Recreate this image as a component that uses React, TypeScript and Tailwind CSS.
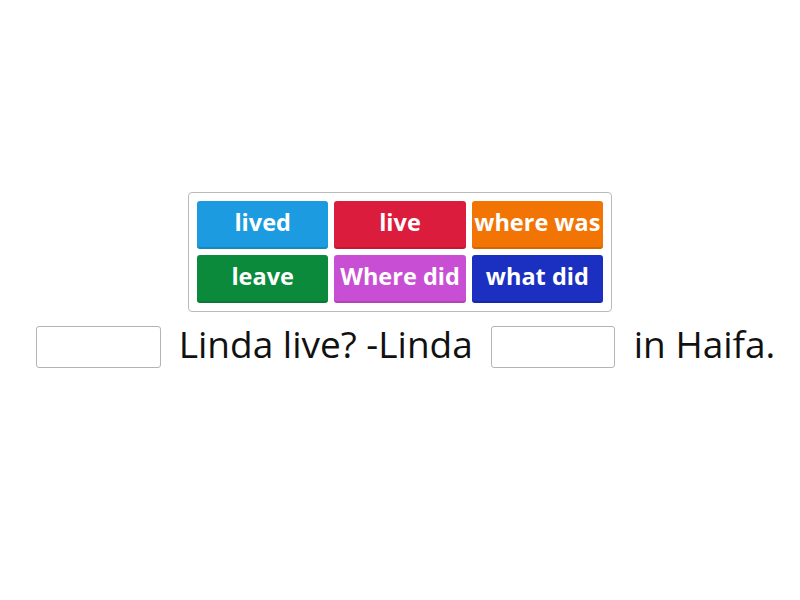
import React from "react";

const tiles = [
  { t: "lived", c: "bg-[#1c9be0]" },
  { t: "live", c: "bg-[#dc1c3c]" },
  { t: "where was", c: "bg-[#f27405]" },
  { t: "leave", c: "bg-[#0b8a3c]" },
  { t: "Where did", c: "bg-[#c84fd3]" },
  { t: "what did", c: "bg-[#1b2fc0]" },
];

export default function App() {
  return (
    <div className="w-[800px] h-[600px] bg-white font-['Open_Sans',sans-serif] flex flex-col items-center pt-[192px]">
      <div className="w-[424px] h-[120px] border border-[#b9b9b9] rounded-[4px] p-2 grid grid-cols-3 gap-[6px]">
        {tiles.map((x) => (
          <div
            key={x.t}
            className={`${x.c} rounded-[3px] flex items-center justify-center text-white font-bold text-[23.5px] pb-[4px] whitespace-nowrap shadow-[inset_0_-2px_0_rgba(0,0,0,0.12)]`}
          >
            {x.t}
          </div>
        ))}
      </div>
      <div className="mt-[13px] flex items-center ml-[11px]">
        <div className="w-[125px] h-[42px] border border-[#b4b4b4] rounded-[3px] bg-white" />
        <span className="text-[37px] text-[#111] mx-[18px] leading-none pb-[7px]">Linda live? -Linda</span>
        <div className="w-[124px] h-[42px] border border-[#b4b4b4] rounded-[3px] bg-white" />
        <span className="text-[37px] text-[#111] ml-[19px] leading-none pb-[7px]">in Haifa.</span>
      </div>
    </div>
  );
}
